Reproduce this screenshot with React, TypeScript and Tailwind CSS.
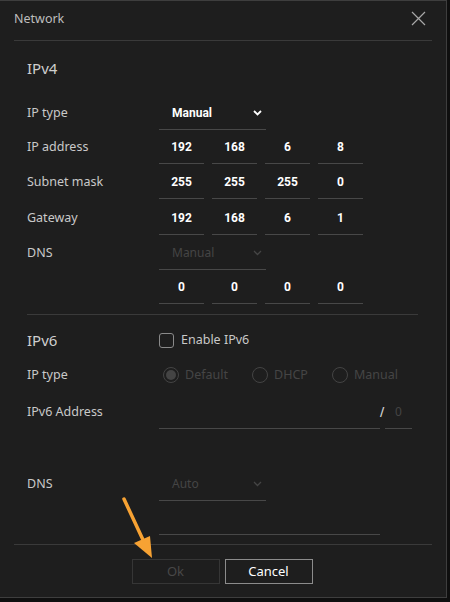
import React from "react";

const label = "w-[132px] shrink-0 text-[12.5px] text-[#c9c9c9]";
const font = { fontFamily: '"Noto Sans", "Open Sans", sans-serif' };

function Chevron({ dim }: { dim?: boolean }) {
  return (
    <svg width="9" height="6" viewBox="0 0 9 6" className="shrink-0">
      <path d="M1 1 L4.5 4.5 L8 1" fill="none" stroke={dim ? "#454545" : "#ffffff"} strokeWidth={dim ? 1.3 : 1.8} />
    </svg>
  );
}

function Select({ value, dim }: { value: string; dim?: boolean }) {
  return (
    <div className="w-[107px] h-full border-b border-[#484848] flex items-center justify-between pl-[13px] pr-[4px]">
      <span
        className={dim ? "text-[12px] text-[#454545]" : "text-[12px] font-bold text-white"}
        style={dim ? font : { fontFamily: "Roboto, Arial, sans-serif" }}
      >
        {value}
      </span>
      <Chevron dim={dim} />
    </div>
  );
}

function Octets({ values }: { values: string[] }) {
  return (
    <div className="flex gap-[8px] h-full">
      {values.map((v, i) => (
        <div
          key={i}
          className="w-[45px] h-full border-b border-[#484848] flex items-center justify-center text-[12px] font-bold text-white"
          style={{ fontFamily: "Roboto, Arial, sans-serif" }}
        >
          {v}
        </div>
      ))}
    </div>
  );
}

function Row({ name, children, cls }: { name?: string; children: React.ReactNode; cls: string }) {
  return (
    <div className={`flex items-center ${cls}`}>
      <div className={label}>{name ?? ""}</div>
      {children}
    </div>
  );
}

function Radio({ text, checked }: { text: string; checked?: boolean }) {
  return (
    <div className="flex items-center gap-[6px]">
      <div className="w-[16px] h-[16px] rounded-full border border-[#444] flex items-center justify-center">
        {checked && <div className="w-[10px] h-[10px] rounded-full bg-[#444]" />}
      </div>
      <span className="text-[12.5px] text-[#454545]">{text}</span>
    </div>
  );
}

export default function App() {
  return (
    <div className="w-[450px] h-[602px] bg-[#0f0f0f] relative overflow-hidden" style={font}>
      <div className="w-[447px] h-[598px] bg-[#1e1e1e] border-t border-r border-b border-[#3e3e3e] flex flex-col">
        {/* header */}
        <div className="mx-[14px] h-[40px] border-b border-[#3a3a3a] flex items-center justify-between">
          <span className="text-[12.5px] text-[#bdbdbd] pb-[2px]">Network</span>
          <svg width="15" height="15" viewBox="0 0 15 15" className="mr-[6px] mb-[4px]">
            <path d="M1 1 L14 14 M14 1 L1 14" stroke="#a8a8a8" strokeWidth="1.2" />
          </svg>
        </div>

        <div className="pl-[27px] pr-[28px] flex flex-col">
          <div className="mt-[17px] h-[20px] flex items-center text-[15px] text-[#cfcfcf]">IPv4</div>

          <Row name="IP type" cls="mt-[18px] h-[34px]">
            <Select value="Manual" />
          </Row>
          <Row name="IP address" cls="h-[34px]">
            <Octets values={["192", "168", "6", "8"]} />
          </Row>
          <Row name="Subnet mask" cls="mt-[1px] h-[34px]">
            <Octets values={["255", "255", "255", "0"]} />
          </Row>
          <Row name="Gateway" cls="mt-[2px] h-[34px]">
            <Octets values={["192", "168", "6", "1"]} />
          </Row>
          <Row name="DNS" cls="mt-[1px] h-[34px]">
            <Select value="Manual" dim />
          </Row>
          <Row cls="h-[34px]">
            <Octets values={["0", "0", "0", "0"]} />
          </Row>

          <div className="mt-[10px] border-t border-[#3a3a3a]" />

          <div className="mt-[10px] h-[30px] flex items-center">
            <div className="w-[132px] shrink-0 text-[15px] text-[#cfcfcf]">IPv6</div>
            <div className="flex items-center gap-[7px]">
              <div className="w-[15px] h-[15px] rounded-[3px] border border-[#8a8a8a]" />
              <span className="text-[12.5px] text-[#c9c9c9]">Enable IPv6</span>
            </div>
          </div>

          <Row name="IP type" cls="mt-[3px] h-[34px]">
            <div className="flex items-center pl-[4px]">
              <div className="w-[89px]"><Radio text="Default" checked /></div>
              <div className="w-[80px]"><Radio text="DHCP" /></div>
              <Radio text="Manual" />
            </div>
          </Row>

          <Row name="IPv6 Address" cls="mt-[3px] h-[34px]">
            <div className="flex items-center h-full">
              <div className="w-[221px] h-full border-b border-[#484848]" />
              <div className="w-[5px] text-[12px] text-[#d0d0d0] font-bold" style={{ fontFamily: "Roboto, Arial, sans-serif" }}>/</div>
              <div className="w-[27px] h-full border-b border-[#484848] flex items-center justify-center text-[12px] text-[#444]">0</div>
            </div>
          </Row>

          <Row name="DNS" cls="mt-[38px] h-[34px]">
            <Select value="Auto" dim />
          </Row>
          <Row cls="h-[34px]">
            <div className="w-[221px] h-full border-b border-[#484848]" />
          </Row>
        </div>

        <div className="mx-[14px] mt-[9px] border-t border-[#3a3a3a] flex justify-center gap-[5px] pt-[14px] pr-[2px]">
          <button className="w-[88px] h-[25px] border border-[#363636] text-[13px] text-[#484848]">Ok</button>
          <button className="w-[88px] h-[25px] border border-[#8c8c8c] text-[13px] text-white">Cancel</button>
        </div>
      </div>

      <svg className="absolute left-0 top-0 pointer-events-none" width="450" height="602">
        <line x1="124" y1="499" x2="144" y2="542" stroke="#f7a233" strokeWidth="3.5" strokeLinecap="round" />
        <polygon points="134,543 150,536 152,558" fill="#f7a233" />
      </svg>
    </div>
  );
}
